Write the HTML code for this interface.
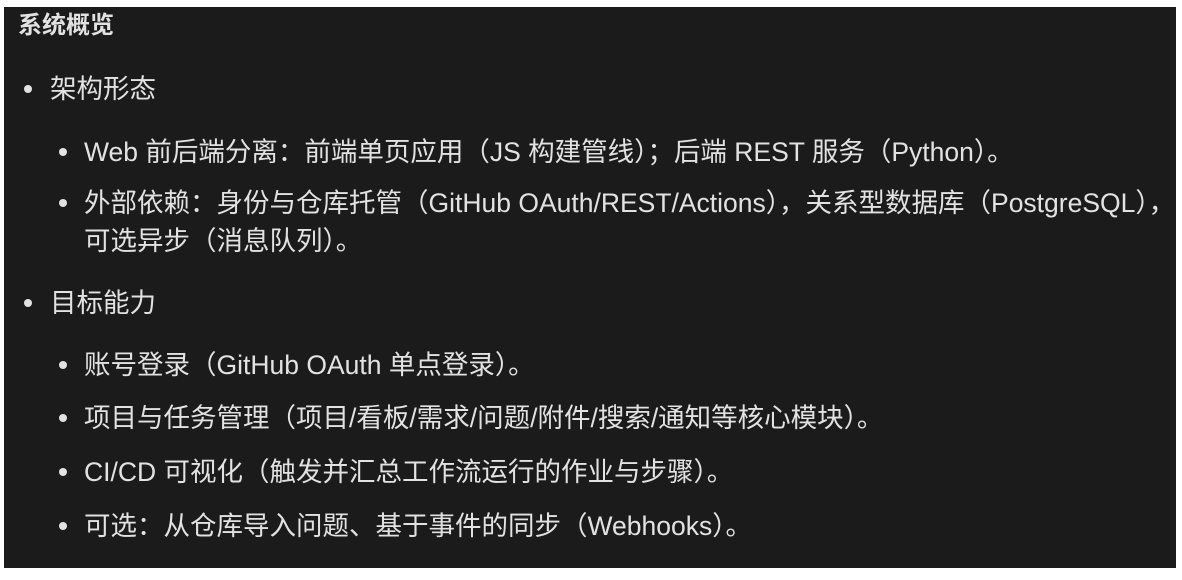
<!DOCTYPE html>
<html><head><meta charset="utf-8"><style>
html,body{margin:0;padding:0;background:#fff;width:1182px;height:580px;overflow:hidden}
.box{position:absolute;left:4px;top:7px;width:1172px;height:561px;background:#1b1b1b}
.t{position:absolute;color:#e2e2e2;font-family:"Liberation Sans","Noto Sans CJK SC",sans-serif;font-size:26.5px;white-space:nowrap;line-height:38px}
.h{font-weight:bold;font-size:24px}
.d{position:absolute;width:8px;height:8px;border-radius:50%;background:#e2e2e2}
</style></head><body>
<div class="box"></div>
<div class="t h" style="left:18px;top:7px">系统概览</div>
<div class="d" style="left:24px;top:85px"></div>
<div class="t" style="left:50px;top:70px">架构形态</div>
<div class="d" style="left:59px;top:148px"></div>
<div class="t" style="left:84px;top:133px">Web 前后端分离：前端单页应用（JS 构建管线）；后端 REST 服务（Python）。</div>
<div class="d" style="left:59px;top:199px"></div>
<div class="t" style="left:84px;top:184px">外部依赖：身份与仓库托管（GitHub OAuth/REST/Actions），关系型数据库（PostgreSQL），<br>可选异步（消息队列）。</div>
<div class="d" style="left:24px;top:299px"></div>
<div class="t" style="left:50px;top:284px">目标能力</div>
<div class="d" style="left:59px;top:361px"></div>
<div class="t" style="left:84px;top:346px">账号登录（GitHub OAuth 单点登录）。</div>
<div class="d" style="left:59px;top:414px"></div>
<div class="t" style="left:84px;top:399px">项目与任务管理（项目/看板/需求/问题/附件/搜索/通知等核心模块）。</div>
<div class="d" style="left:59px;top:468px"></div>
<div class="t" style="left:84px;top:453px">CI/CD 可视化（触发并汇总工作流运行的作业与步骤）。</div>
<div class="d" style="left:59px;top:522px"></div>
<div class="t" style="left:84px;top:507px">可选：从仓库导入问题、基于事件的同步（Webhooks）。</div>
</body></html>
